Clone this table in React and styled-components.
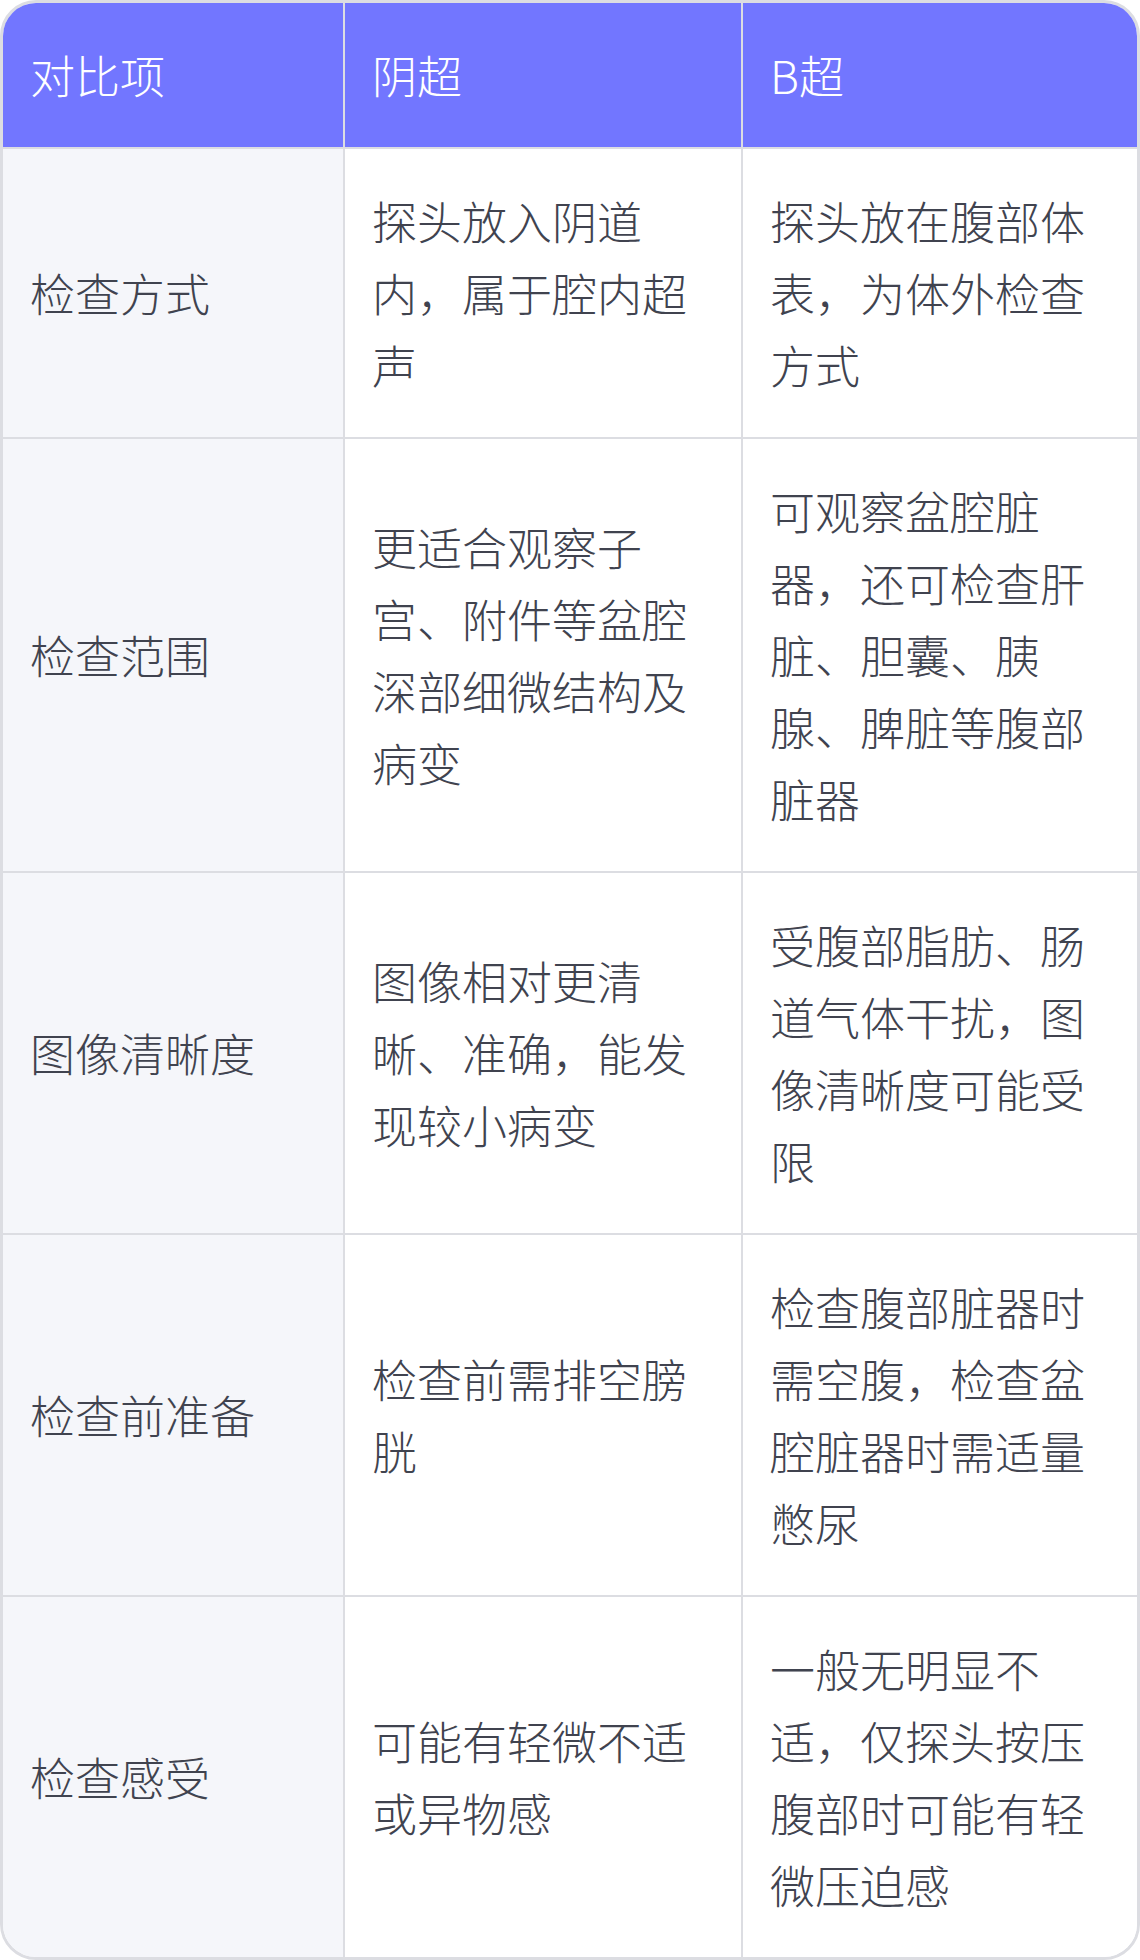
import React from "react";
import styled, { createGlobalStyle } from "styled-components";

const Global = createGlobalStyle`
  html, body { margin: 0; padding: 0; background: #ffffff; }
  * { box-sizing: border-box; }
  body {
    font-family: "Noto Sans CJK SC", "Noto Sans", sans-serif;
  }
`;

const Frame = styled.div`
  width: 1140px;
  border: 3px solid #dcdde2;
  border-radius: 36px;
  overflow: hidden;
  background: #ffffff;
`;

const Grid = styled.div`
  display: grid;
  grid-template-columns: 342px 398px 1fr;
`;

const Cell = styled.div`
  display: flex;
  align-items: center;
  padding: 36px 27px;
  font-size: 45px;
  line-height: 72px;
  font-weight: 300;
  color: ${(p) => (p.$head ? "#ffffff" : "#40434f")};
  background: ${(p) => (p.$head ? "#7276ff" : p.$first ? "#f5f6fa" : "#ffffff")};
  border-right: ${(p) => (p.$last ? "none" : "2px solid #dcdde2")};
  border-bottom: ${(p) => (p.$bottom ? "none" : "2px solid #dcdde2")};
  word-break: break-all;
`;

const header = ["对比项", "阴超", "B超"];

const rows = [
  ["检查方式", "探头放入阴道内，属于腔内超声", "探头放在腹部体表，为体外检查方式"],
  ["检查范围", "更适合观察子宫、附件等盆腔深部细微结构及病变", "可观察盆腔脏器，还可检查肝脏、胆囊、胰腺、脾脏等腹部脏器"],
  ["图像清晰度", "图像相对更清晰、准确，能发现较小病变", "受腹部脂肪、肠道气体干扰，图像清晰度可能受限"],
  ["检查前准备", "检查前需排空膀胱", "检查腹部脏器时需空腹，检查盆腔脏器时需适量憋尿"],
  ["检查感受", "可能有轻微不适或异物感", "一般无明显不适，仅探头按压腹部时可能有轻微压迫感"],
];

export default function App() {
  return (
    <>
      <Global />
      <Frame>
        <Grid>
          {header.map((h, i) => (
            <Cell key={"h" + i} $head $last={i === 2}>
              {h}
            </Cell>
          ))}
          {rows.map((r, ri) =>
            r.map((c, ci) => (
              <Cell
                key={ri + "-" + ci}
                $first={ci === 0}
                $last={ci === 2}
                $bottom={ri === rows.length - 1}
              >
                {c}
              </Cell>
            ))
          )}
        </Grid>
      </Frame>
    </>
  );
}
